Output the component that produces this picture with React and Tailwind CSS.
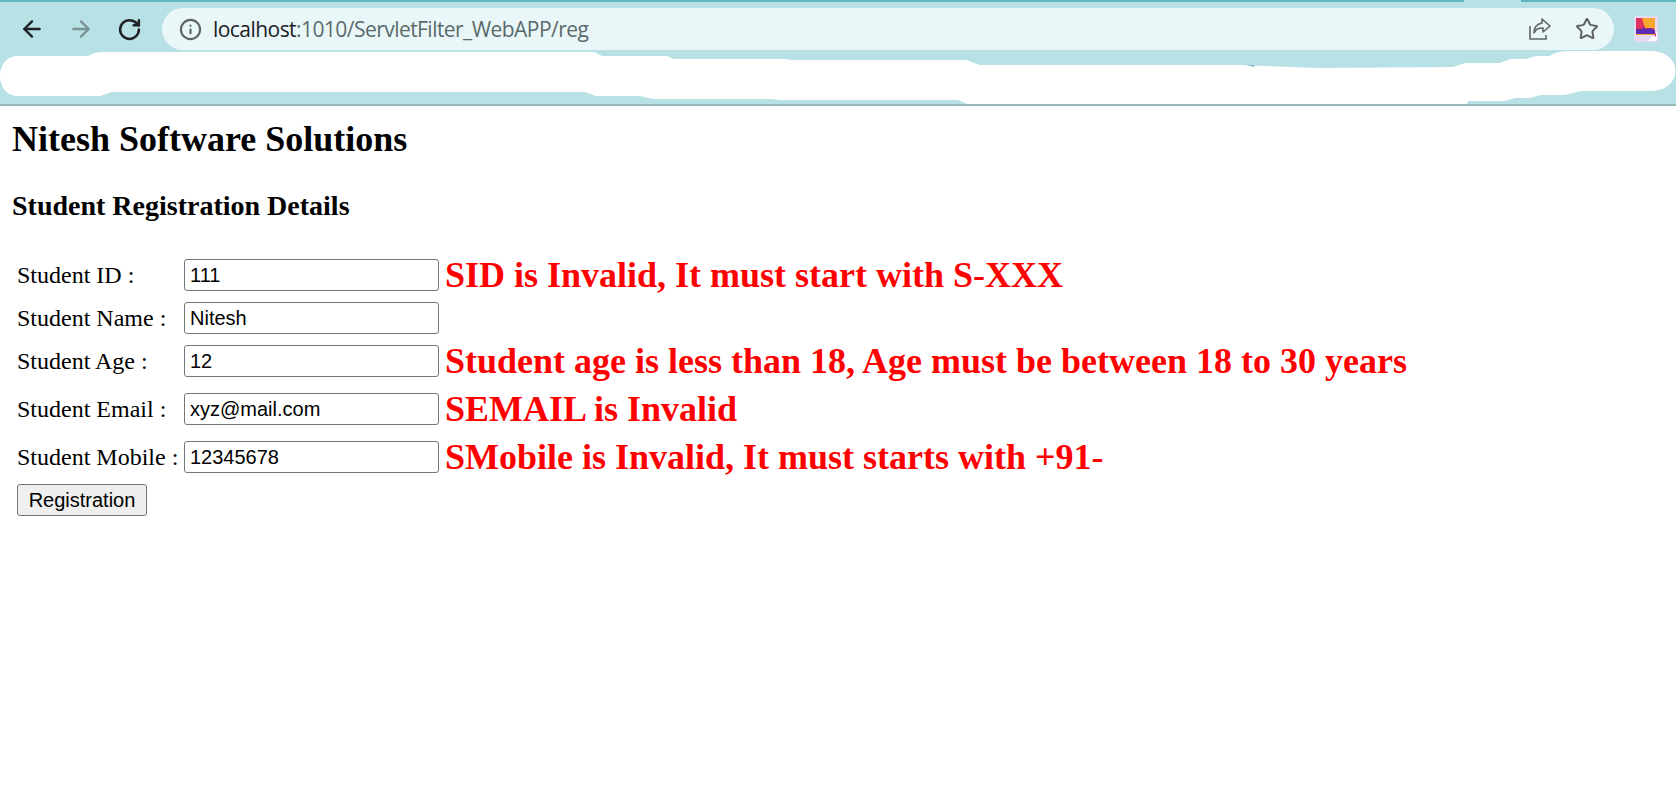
import { ArrowLeft, ArrowRight, RotateCw, Info, Star } from 'lucide-react'

const ROWS = [
  { label: 'Student ID :', value: '111', error: 'SID is Invalid, It must start with S-XXX', gap: 'mt-0' },
  { label: 'Student Name :', value: 'Nitesh', error: '', gap: 'mt-[11px]' },
  { label: 'Student Age :', value: '12', error: 'Student age is less than 18, Age must be between 18 to 30 years', gap: 'mt-[11px]' },
  { label: 'Student Email :', value: 'xyz@mail.com', error: 'SEMAIL is Invalid', gap: 'mt-4' },
  { label: 'Student Mobile :', value: '12345678', error: 'SMobile is Invalid, It must starts with +91-', gap: 'mt-4' },
]

function Toolbar() {
  return (
    <div className="relative h-[106px] bg-[#b8e1e5] border-b-2 border-[#9ab7b9] overflow-hidden">
      <div className="h-[2px] bg-[#5fb8c0]" />
      <div className="flex items-center h-[47px] pt-[7px]">
        <div className="flex items-center w-[162px] pl-[19px] gap-[23px]">
          <ArrowLeft size={26} strokeWidth={2.2} className="text-[#202124]" />
          <ArrowRight size={26} strokeWidth={2.2} className="text-[#7b9397]" />
          <RotateCw size={25} strokeWidth={2.4} className="text-[#202124]" />
        </div>
        <div className="flex items-center w-[1452px] h-[42px] rounded-full bg-[#eaf7f8] pl-[17px] pr-[15px]">
          <Info size={23} strokeWidth={2.2} className="text-[#5f6368]" />
          <span className="ml-[11px] text-[21px] leading-none text-[#5a6a6c] font-['Open_Sans',sans-serif] tracking-[-0.55px]">
            <span className="text-[#202124]">localhost</span>:1010/ServletFilter_WebAPP/reg
          </span>
          <div className="ml-auto flex items-center gap-[23px]">
            <svg width="24" height="24" viewBox="0 0 24 24" fill="none" stroke="#5f6368" strokeWidth="1.6">
              <path d="M2 9v13h16v-4" />
              <path d="M14 2l8 7-7 6v-4c-5 0-7 1-9 5 0-6 3-9 8-10z" strokeLinejoin="round" />
            </svg>
            <Star size={24} strokeWidth={2} className="text-[#5f6368]" />
          </div>
        </div>
        <svg className="ml-[20px]" width="24" height="26" viewBox="0 0 24 26">
          <rect width="24" height="26" rx="2" fill="#e6d9f5" />
          <rect x="2" y="2" width="19" height="17" fill="#f6a92c" />
          <path d="M2 2h6l3 10h9v5H2z" fill="#e0325f" />
          <path d="M2 13h6l2-2 2 2 4-1 5 2v4H2z" fill="#5b2db5" />
          <path d="M14 25l9-9v7l-2 2z" fill="#fff" />
          <path d="M20 19l2-2v4z" fill="#e0325f" />
        </svg>
      </div>
      {/* redacted bookmarks scribble */}
      <svg className="absolute left-0 top-0" width="1676" height="106" viewBox="0 0 1676 106">
        <path
          fill="#fff"
          d="M18 56H88Q94 52 104 52H594L602 56H667L674 59H786L790 60H966L980 65H1240L1320 68L1453 67L1465 63H1500L1510 59H1526L1536 56H1550Q1556 51 1570 51H1650C1684 51 1684 91 1650 91H1581L1565 95H1541L1530 98H1515L1505 101H1468L1466 106H972L958 100H780L772 99H653L640 96H596L585 92H112L100 96H18C-6 96 -6 56 18 56Z"
        />
        <rect x="1464" y="0" width="57" height="2" fill="#b8e1e5" />
        <rect x="966" y="104" width="272" height="1" fill="#dfe6e6" />
        <path d="M1246 65h8l1 2z" fill="#7fb5c5" />
      </svg>
    </div>
  )
}

export default function App() {
  return (
    <div className="min-h-[808px] bg-white text-black font-['Liberation_Serif',serif]">
      <Toolbar />
      <div className="pl-3 pt-[13px]">
        <h1 className="text-[36px] leading-[41px] font-bold">Nitesh Software Solutions</h1>
        <h3 className="mt-[30px] text-[28px] leading-[32px] font-bold">Student Registration Details</h3>
      </div>
      <div className="pl-[17px] mt-[37px]">
        {ROWS.map(r => (
          <div key={r.label} className={`flex items-center h-8 ${r.gap}`}>
            <label className="w-[167px] text-[24px] leading-none whitespace-nowrap">{r.label}</label>
            <input
              readOnly
              value={r.value}
              className="w-[255px] h-8 px-[5px] border border-[#767676] rounded-[3px] bg-white text-[20px] text-black font-['Liberation_Sans',sans-serif] outline-none"
            />
            {r.error && (
              <span className="ml-[6px] text-[36px] leading-none font-bold text-[#ff0000] whitespace-nowrap">{r.error}</span>
            )}
          </div>
        ))}
        <button className="mt-[11px] w-[130px] h-8 border border-[#767676] rounded-[3px] bg-[#efefef] text-[20px] text-black font-['Liberation_Sans',sans-serif]">
          Registration
        </button>
      </div>
    </div>
  )
}
